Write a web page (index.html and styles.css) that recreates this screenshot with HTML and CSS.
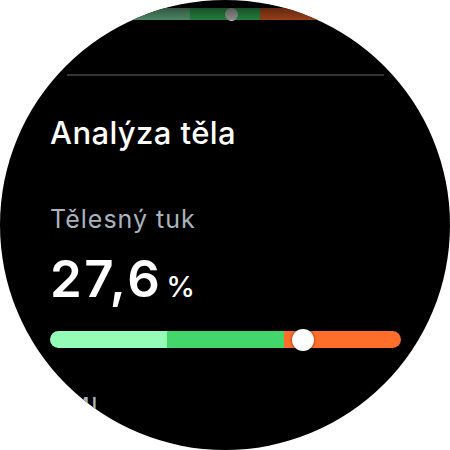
FILE: index.html
```html
<!DOCTYPE html>
<html lang="cs">
<head>
    <meta charset="UTF-8">
    <meta name="viewport" content="width=device-width, initial-scale=1.0">
    <title>Analýza těla</title>
    <link rel="stylesheet" href="styles.css">
</head>
<body>
    <div class="watch">
        <div class="prev-bar">
            <div class="range-bar small">
                <span class="seg low"></span>
                <span class="seg mid"></span>
                <span class="seg high"></span>
                <span class="thumb" style="left: 52.9%"></span>
            </div>
        </div>
        <div class="divider"></div>

        <div class="content">
            <h1 class="section-title">Analýza těla</h1>

            <div class="metric-label">Tělesný tuk</div>
            <div class="metric-value">
                <span class="number">27,6</span>
                <span class="unit">%</span>
            </div>
            <div class="range-bar">
                <span class="seg low"></span>
                <span class="seg mid"></span>
                <span class="seg high"></span>
                <span class="thumb" style="left: 72%"></span>
            </div>

            <div class="metric-label next">BMI</div>
        </div>
    </div>
</body>
</html>
```

FILE: styles.css
```css
body {
    margin: 0;
    background-color: #ffffff;
    font-family: Inter, "Noto Sans", sans-serif;
}

.watch {
    width: 450px;
    height: 450px;
    border-radius: 50%;
    overflow: hidden;
    background-color: #000000;
    color: #ffffff;
    padding-top: 8px;
    box-sizing: border-box;
}

.prev-bar {
    display: flex;
    justify-content: center;
    position: relative;
}

.prev-bar::after {
    content: "";
    position: absolute;
    inset: 0;
    background: linear-gradient(to bottom, rgba(0, 0, 0, 0.55), rgba(0, 0, 0, 0.3));
}

.divider {
    height: 2px;
    margin: 54px 66px 0 67px;
    background-color: #333333;
}

.content {
    padding: 0 49px 0 50px;
}

.section-title {
    margin: 41px 0 0;
    font-size: 31px;
    line-height: 31px;
    font-weight: 500;
    letter-spacing: 0.4px;
}

.metric-label {
    margin-top: 59px;
    font-size: 25px;
    line-height: 25px;
    color: #a9b3bd;
    letter-spacing: 1px;
}

.metric-label.next {
    margin-top: 47px;
}

.metric-value {
    margin-top: 21px;
    display: flex;
    align-items: baseline;
    gap: 4px;
}

.number {
    font-size: 51px;
    line-height: 51px;
    font-weight: 600;
    letter-spacing: 2.5px;
}

.unit {
    font-size: 29px;
    font-weight: 500;
    letter-spacing: 1px;
}

.range-bar {
    position: relative;
    display: flex;
    height: 17px;
    margin-top: 27px;
    border-radius: 9px;
}

.range-bar .seg {
    flex: 1;
}

.seg.low {
    background-color: #95fcb8;
    border-radius: 9px 0 0 9px;
}

.seg.mid {
    background-color: #42d66b;
}

.seg.high {
    background-color: #ff6e2b;
    border-radius: 0 9px 9px 0;
}

.thumb {
    position: absolute;
    top: 50%;
    width: 22px;
    height: 22px;
    margin: -11px 0 0 -11px;
    border-radius: 50%;
    background-color: #ffffff;
    box-shadow: 0 0 3px rgba(0, 0, 0, 0.6);
}

.range-bar.small {
    width: 210px;
    height: 12px;
    margin-top: 0;
    border-radius: 0;
}

.range-bar.small .seg {
    border-radius: 0;
}

.range-bar.small .seg.low {
    background-color: #6fbf8f;
}

.range-bar.small .seg.mid {
    background-color: #33b258;
}

.range-bar.small .seg.high {
    background-color: #d65a22;
}

.range-bar.small .thumb {
    width: 13px;
    height: 13px;
    margin: -6.5px 0 0 -6.5px;
    background-color: #c8c8c8;
    box-shadow: none;
}
```
